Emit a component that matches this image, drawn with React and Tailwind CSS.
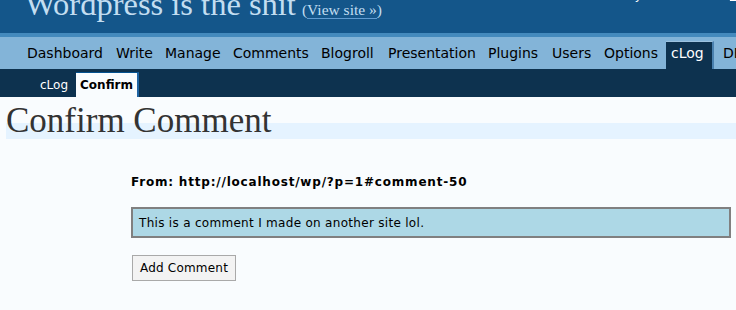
const menu = [
  { label: "Dashboard", w: "w-[89px]" },
  { label: "Write", w: "w-[49px]" },
  { label: "Manage", w: "w-[68px]" },
  { label: "Comments", w: "w-[88px]" },
  { label: "Blogroll", w: "w-[67px]" },
  { label: "Presentation", w: "w-[100px]" },
  { label: "Plugins", w: "w-[64px]" },
  { label: "Users", w: "w-[52px]" },
  { label: "Options", w: "w-[67px]" },
  { label: "cLog", w: "w-[48px]", current: true },
  { label: "DB Backup", w: "w-[90px]" },
];

export default function App() {
  return (
    <div className="relative w-[736px] h-[310px] overflow-hidden bg-[#f9fcfe] text-[#333] font-['DejaVu_Sans',Verdana,sans-serif]">
      {/* header */}
      <div className="relative h-[33px] bg-[#14568a] overflow-hidden">
        <div className="flex items-baseline pl-[25px] -mt-[12px] whitespace-nowrap">
          <h1 className="text-[32.5px] leading-[33px] font-normal text-[#c3def1] font-['Liberation_Serif',Georgia,serif]">
            Wordpress is the shit
          </h1>
          <span className="ml-[6px] text-[15.5px] text-[#c3def1] font-['Liberation_Serif',Georgia,serif]">
            (<a className="border-b border-[#5f9bd0]">View site &raquo;</a>)
          </span>
        </div>
        <div className="absolute left-[601px] top-[-12px] flex text-[12px] leading-[14px] text-white whitespace-nowrap">
          <span>
            Howdy, <strong>admin</strong>.
          </span>
          <span className="ml-[30px]">
            [<a className="underline">Sign Out</a>, <a className="underline">My Account</a>]
          </span>
        </div>
      </div>
      <div className="h-[4px] bg-[#448abd]" />

      {/* main menu */}
      <div className="flex items-end h-[32px] pl-[22px] bg-[#83b4d8] whitespace-nowrap">
        {menu.map((m) =>
          m.current ? (
            <a
              key={m.label}
              className={`${m.w} shrink-0 mr-[4px] h-[28px] px-[5px] pt-[3px] leading-[16px] text-[14px] text-white bg-[#0d324f] border-t border-[#9cc2df] border-r-2 border-r-[#4a81af]`}
            >
              {m.label}
            </a>
          ) : (
            <a
              key={m.label}
              className={`${m.w} shrink-0 h-[28px] px-[5px] pt-[3px] leading-[16px] text-[14px] text-black border-t border-transparent`}
            >
              {m.label}
            </a>
          )
        )}
      </div>

      {/* submenu */}
      <div className="flex items-end gap-[4px] h-[28px] pl-[36px] bg-[#0d324f]">
        <a className="h-[25px] px-[4px] pt-[6px] leading-[14px] text-[12px] text-white">
          cLog
        </a>
        <a className="w-[63px] h-[25px] px-[4px] pt-[5px] leading-[14px] text-[12px] font-bold text-black bg-[#f9fcfe] border-t border-[#045290] border-r-2 border-r-[#1f64a3] whitespace-nowrap">
          Confirm
        </a>
      </div>

      {/* page */}
      <h2 className="mt-[21px] ml-[6px] text-[35px] leading-[5px] font-normal text-[#333] border-b-[16px] border-[#e5f3ff] font-['Liberation_Serif','Times_New_Roman',serif] whitespace-nowrap">
        Confirm Comment
      </h2>

      <div className="ml-[131px] w-[600px]">
        <p className="mt-[36px] text-[12px] leading-[14px] font-bold tracking-[0.8px] text-black whitespace-nowrap">
          From: http://localhost/wp/?p=1#comment-50
        </p>
        <div className="mt-[18px] h-[31px] pt-[7px] pl-[6px] border-2 border-[#808080] bg-[#add8e6] text-[12px] leading-[14px] tracking-[0.3px] text-black">
          This is a comment I made on another site lol.
        </div>
        <button className="mt-[17px] ml-[1px] h-[26px] px-[7px] border border-[#a9a9a9] bg-[#f3f3f3] text-[12px] leading-[14px] tracking-[0.2px] text-black">
          Add Comment
        </button>
      </div>
    </div>
  );
}
